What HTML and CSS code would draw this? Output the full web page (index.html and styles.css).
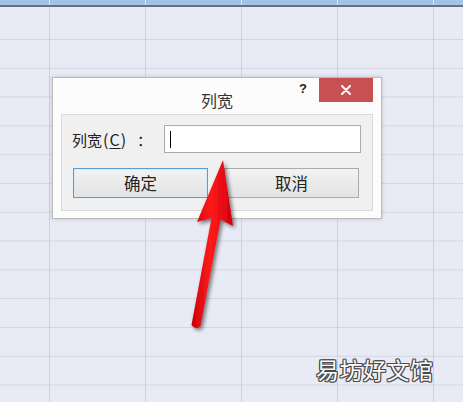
FILE: index.html
```html
<!DOCTYPE html>
<html lang="zh-CN">
<head>
<meta charset="utf-8">
<title>列宽</title>
<link rel="stylesheet" href="styles.css">
</head>
<body>
<div class="sheet">
  <div class="colhead"></div>
  <div class="grid"></div>

  <div class="dialog">
    <div class="titlebar">
      <span class="title">列宽</span>
      <span class="help">?</span>
      <span class="close">
        <svg width="12" height="10" viewBox="0 0 12 10"><path d="M2 1 L10 9 M10 1 L2 9" stroke="#fff" stroke-width="2" stroke-linecap="round"/></svg>
      </span>
    </div>
    <div class="panel">
      <div class="row">
        <label class="label">列宽<span class="key">(<u>C</u>)</span><span class="colon">：</span></label>
        <div class="input"><span class="caret"></span></div>
      </div>
      <div class="row buttons">
        <button class="btn default">确定</button>
        <button class="btn">取消</button>
      </div>
    </div>
  </div>

  <svg class="arrow" width="463" height="402" viewBox="0 0 463 402">
    <defs>
      <filter id="sh" x="-50%" y="-20%" width="200%" height="140%">
        <feGaussianBlur in="SourceAlpha" stdDeviation="2.2"/>
        <feOffset dx="1.5" dy="1.5" result="b"/>
        <feComponentTransfer><feFuncA type="linear" slope="0.55"/></feComponentTransfer>
        <feMerge><feMergeNode/><feMergeNode in="SourceGraphic"/></feMerge>
      </filter>
      <linearGradient id="rg" x1="0" y1="0" x2="1" y2="0">
        <stop offset="0" stop-color="#c8000c"/>
        <stop offset="0.45" stop-color="#ff1a1a"/>
        <stop offset="1" stop-color="#d0000e"/>
      </linearGradient>
    </defs>
    <path filter="url(#sh)" fill="url(#rg)" d="M223 160 L233 226 L220.5 219.5 L200.5 326 Q196 331 191.5 325 L211.5 218 L197 222 Z"/>
  </svg>

  <div class="watermark">易坊好文馆</div>
</div>
</body>
</html>
```
FILE: styles.css
```css
html, body {
  margin: 0;
  padding: 0;
}
body {
  width: 463px;
  height: 402px;
  overflow: hidden;
  font-family: "Noto Sans CJK SC", "Noto Sans", sans-serif;
}
.sheet {
  position: relative;
  width: 463px;
  height: 402px;
  background: #e8ebf5;
  display: flex;
  flex-direction: column;
}
.colhead {
  height: 7px;
  flex: none;
  background:
    linear-gradient(to right, #d6e4f4 0 1px, transparent 1px) 49px 0 / 96px 5px repeat-x,
    linear-gradient(to bottom, #a4c3e6 0 5px, #6a7079 5px 7px);
}
.grid {
  flex: 1;
  background:
    linear-gradient(to right, #cdd1de 0 1px, transparent 1px) 49px 0 / 96px 100% repeat-x,
    linear-gradient(#e8ebf5, #e8ebf5) 0 0 / 100% 8px no-repeat,
    linear-gradient(to bottom, transparent 0 27.8px, #d3d6e1 27.8px 28.8px) 0 4.2px / 100% 28.8px repeat-y,
    #e8ebf5;
}
.dialog {
  position: absolute;
  left: 52px;
  top: 77px;
  width: 328px;
  height: 140px;
  background: #fcfcfc;
  border: 1px solid #bcbcbc;
  box-shadow: 0 0 4px rgba(0, 0, 0, 0.18);
  display: flex;
  flex-direction: column;
}
.titlebar {
  position: relative;
  height: 36px;
  flex: none;
  display: flex;
  align-items: center;
  justify-content: center;
}
.title {
  font-size: 16px;
  color: #333;
  margin-top: 7px;
}
.help {
  position: absolute;
  left: 246px;
  top: 3px;
  font-family: "Liberation Sans", Arial, sans-serif;
  font-weight: bold;
  font-size: 13px;
  color: #222;
}
.close {
  position: absolute;
  right: 8px;
  top: 0;
  width: 54px;
  height: 24px;
  background: #c75050;
  display: flex;
  align-items: center;
  justify-content: center;
}
.panel {
  flex: 1;
  margin: 0 8px 7px 8px;
  background: #f0f0f0;
  border: 1px solid #dadada;
  padding: 10px 11px 0 10px;
  display: flex;
  flex-direction: column;
  gap: 15px;
}
.row {
  display: flex;
  align-items: center;
}
.label {
  width: 92px;
  flex: none;
  font-size: 15px;
  color: #222;
  white-space: nowrap;
}
.key {
  font-size: 16px;
  letter-spacing: 1px;
  margin-left: 1px;
}
.key u {
  text-underline-offset: 2px;
}
.colon {
  margin-left: 10px;
}
.input {
  flex: 1;
  height: 26px;
  background: #fff;
  border: 1px solid #a9abb2;
  display: flex;
  align-items: center;
  padding-left: 5px;
}
.caret {
  width: 1px;
  height: 17px;
  background: #000;
}
.buttons {
  gap: 16px;
  padding-left: 1px;
}
.btn {
  width: 135px;
  height: 30px;
  font-family: "Noto Sans CJK SC", "Noto Sans", sans-serif;
  font-size: 16.5px;
  color: #222;
  background: linear-gradient(#f2f2f2, #e3e3e3);
  border: 1px solid #acacac;
  padding: 0;
}
.btn.default {
  border-color: #5b9bd0;
  box-shadow: inset 0 0 0 1px #d9e9f6;
}
.arrow {
  position: absolute;
  left: 0;
  top: 0;
  pointer-events: none;
}
.watermark {
  position: absolute;
  left: 316px;
  top: 352px;
  font-size: 23px;
  letter-spacing: 0.5px;
  color: #fafafa;
  text-shadow:
    1px 0 0 #4a4a4a, -1px 0 0 #4a4a4a, 0 1px 0 #4a4a4a, 0 -1px 0 #4a4a4a,
    1px 1px 0 #4a4a4a, -1px -1px 0 #4a4a4a, 1px -1px 0 #4a4a4a, -1px 1px 0 #4a4a4a;
}
```
